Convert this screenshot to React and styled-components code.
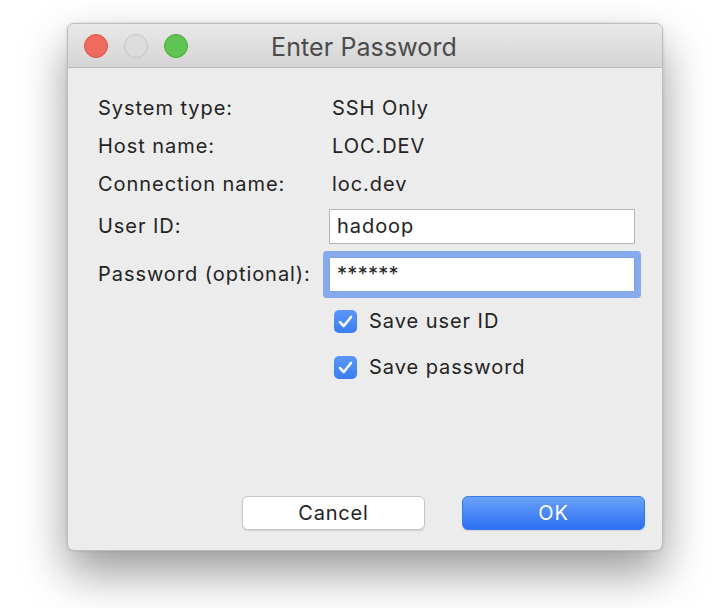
import React from "react";
import styled, { createGlobalStyle } from "styled-components";

const GlobalStyle = createGlobalStyle`
  html, body {
    margin: 0;
    padding: 0;
    background: #ffffff;
  }
  body {
    font-family: Inter, "Liberation Sans", sans-serif;
    -webkit-font-smoothing: antialiased;
  }
`;

const Page = styled.div`
  width: 724px;
  height: 608px;
  overflow: hidden;
  padding: 23px 0 0 67px;
  box-sizing: border-box;
`;

const Window = styled.div`
  width: 596px;
  height: 528px;
  box-sizing: border-box;
  display: flex;
  flex-direction: column;
  background: #ececec;
  border: 1px solid #bdbdbd;
  border-radius: 7px;
  box-shadow: 0 22px 46px rgba(0, 0, 0, 0.4), 0 0 3px rgba(0, 0, 0, 0.14);
  overflow: hidden;
`;

const TitleBar = styled.div`
  position: relative;
  height: 43px;
  flex-shrink: 0;
  display: flex;
  align-items: center;
  justify-content: center;
  background: linear-gradient(#e9e9e9, #d4d4d4);
  border-bottom: 1px solid #b8b8b8;
`;

const Lights = styled.div`
  position: absolute;
  left: 16px;
  top: 10px;
  display: flex;
  gap: 16px;
`;

const Light = styled.span`
  width: 24px;
  height: 24px;
  border-radius: 50%;
  box-sizing: border-box;
  background: ${(p) => p.$fill};
  border: 1px solid ${(p) => p.$edge};
`;

const Title = styled.div`
  font-size: 25px;
  color: #4b4b4b;
  letter-spacing: 0.1px;
  margin: 2px 2px 0 0;
`;

const Body = styled.div`
  flex: 1;
  display: flex;
  flex-direction: column;
  padding: 21px 17px 20px 30px;
`;

const Row = styled.div`
  display: grid;
  grid-template-columns: 231px 306px;
  align-items: center;
  height: ${(p) => p.$h}px;
  margin-top: ${(p) => p.$mt || 0}px;
  font-size: 20px;
  letter-spacing: 0.95px;
  line-height: 38px;
  color: #232323;
`;

const Label = styled.span``;

const Value = styled.span`
  margin-left: 3px;
`;

const Field = styled.input`
  box-sizing: border-box;
  width: 306px;
  height: 35px;
  padding: 0 7px;
  font: inherit;
  font-size: 20px;
  letter-spacing: ${(p) => (p.$focus ? "0.3px" : "0.95px")};
  color: #232323;
  background: #ffffff;
  border: 1px solid ${(p) => (p.$focus ? "#7da2e6" : "#b5b5b5")};
  border-radius: ${(p) => (p.$focus ? "1px" : "0")};
  outline: none;
  box-shadow: ${(p) => (p.$focus ? "0 0 0 6px #86aaec" : "none")};
`;

const CheckRow = styled.label`
  grid-column: 2;
  display: flex;
  align-items: center;
  gap: 12px;
  margin-left: 5px;
`;

const Box = styled.span`
  width: 23px;
  height: 23px;
  border-radius: 5px;
  background: linear-gradient(#5a98f8, #3a7cf3);
  display: flex;
  align-items: center;
  justify-content: center;
`;

const Footer = styled.div`
  margin-top: auto;
  display: flex;
  justify-content: flex-end;
  gap: 37px;
`;

const Button = styled.button`
  width: 183px;
  height: 34px;
  box-sizing: border-box;
  border-radius: 6px;
  font-family: inherit;
  font-size: 20px;
  letter-spacing: 0.8px;
  padding: 0;
  cursor: pointer;
  color: ${(p) => (p.$primary ? "#ffffff" : "#232323")};
  background: ${(p) =>
    p.$primary ? "linear-gradient(#6aa2f8, #2a6ff4)" : "#ffffff"};
  border: 1px solid ${(p) => (p.$primary ? "#3a78ee" : "#c6c6c6")};
  box-shadow: 0 1px 1px rgba(0, 0, 0, 0.12);
`;

const Check = () => (
  <svg width="15" height="13" viewBox="0 0 15 13">
    <path
      d="M2 7.2 L5.8 11 L13 2"
      fill="none"
      stroke="#ffffff"
      strokeWidth="2.6"
      strokeLinecap="round"
      strokeLinejoin="round"
    />
  </svg>
);

const info = [
  ["System type:", "SSH Only"],
  ["Host name:", "LOC.DEV"],
  ["Connection name:", "loc.dev"],
];

export default function App() {
  return (
    <Page>
      <GlobalStyle />
      <Window>
        <TitleBar>
          <Lights>
            <Light $fill="#ef6b5e" $edge="#d9564a" />
            <Light $fill="#dcdcdc" $edge="#c3c3c3" />
            <Light $fill="#5fc454" $edge="#4aa93f" />
          </Lights>
          <Title>Enter Password</Title>
        </TitleBar>
        <Body>
          {info.map(([label, value]) => (
            <Row key={label} $h={38}>
              <Label>{label}</Label>
              <Value>{value}</Value>
            </Row>
          ))}
          <Row $h={35} $mt={4}>
            <Label>User ID:</Label>
            <Field defaultValue="hadoop" />
          </Row>
          <Row $h={35} $mt={13}>
            <Label>Password (optional):</Label>
            <Field $focus defaultValue="******" />
          </Row>
          <Row $h={46} $mt={8}>
            <CheckRow>
              <Box>
                <Check />
              </Box>
              Save user ID
            </CheckRow>
          </Row>
          <Row $h={46}>
            <CheckRow>
              <Box>
                <Check />
              </Box>
              Save password
            </CheckRow>
          </Row>
          <Footer>
            <Button>Cancel</Button>
            <Button $primary>OK</Button>
          </Footer>
        </Body>
      </Window>
    </Page>
  );
}
